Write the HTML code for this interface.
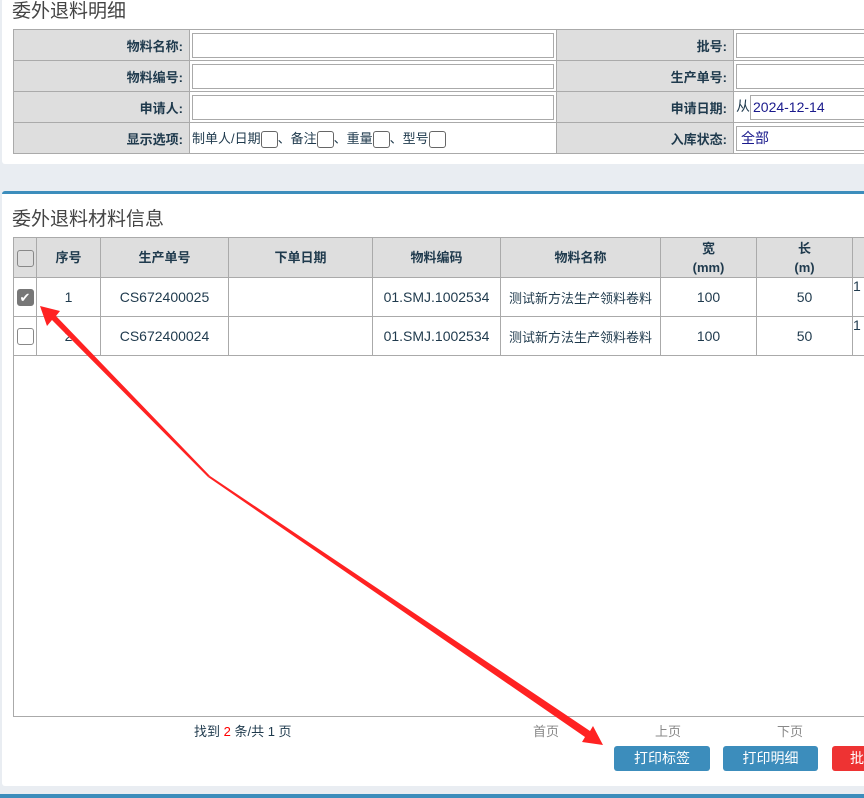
<!DOCTYPE html>
<html><head><meta charset="utf-8"><style>
*{box-sizing:border-box;margin:0;padding:0}
body{width:864px;height:798px;overflow:hidden;background:#e9edf2;font-family:"Liberation Sans","Noto Sans CJK SC",sans-serif;color:#1f3a4d;position:relative}
.p1{position:absolute;left:2px;top:-2px;width:870px;height:166px;background:#fff;border-radius:3px}
.p2{position:absolute;left:2px;top:191px;width:870px;height:595px;background:#fff;border-top:3px solid #3c8dbc;border-radius:3px}
.ln{position:absolute;left:0;top:794px;width:864px;height:4px;background:#3c8dbc}
h3{position:absolute;font-weight:normal;font-size:19px;color:#444}
table{border-collapse:collapse;position:absolute;table-layout:fixed}
td,th{border:1px solid #aaa;font-size:13px;white-space:nowrap;overflow:hidden}
.f td{height:31px;padding:0}
.f .l{background:#dedede;text-align:right;font-weight:bold;padding-right:6px;color:#1f3a4d}
.inp{border:1px solid #aaa;height:25px;margin:0 2px;background:#fff}
.cb{display:inline-block;width:17px;height:17px;border:1px solid #666;border-radius:3px;vertical-align:middle}
.g th{background:#dedede;font-weight:bold;height:40px;line-height:19px}
.g td{height:39px;text-align:center;font-size:14px}
.btn{position:absolute;top:746px;height:25px;background:#3c8dbc;color:#fff;font-size:14px;text-align:center;line-height:25px;border-radius:3px}
</style></head><body>
<div class="p1"></div>
<h3 style="left:12px;top:-4px">委外退料明细</h3>
<table class="f" style="left:13px;top:29px;width:900px">
<colgroup><col style="width:176px"><col style="width:367px"><col style="width:177px"><col style="width:180px"></colgroup>
<tr><td class="l">物料名称:</td><td><div class="inp"></div></td><td class="l">批号:</td><td><div class="inp"></div></td></tr>
<tr><td class="l">物料编号:</td><td><div class="inp"></div></td><td class="l">生产单号:</td><td><div class="inp"></div></td></tr>
<tr><td class="l">申请人:</td><td><div class="inp"></div></td><td class="l">申请日期:</td><td style="font-size:14px;padding-left:2px">从<span class="inp" style="display:inline-block;width:200px;margin:0;color:#1a1a8c;padding-left:2px;line-height:23px;vertical-align:middle">2024-12-14</span></td></tr>
<tr><td class="l">显示选项:</td><td style="padding-left:2px;font-size:13px">制单人/日期<span class="cb"></span>、备注<span class="cb"></span>、重量<span class="cb"></span>、型号<span class="cb"></span></td><td class="l">入库状态:</td><td><div class="inp" style="color:#1a1a8c;padding-left:4px;line-height:23px;font-size:14px">全部</div></td></tr>
</table>
<div class="p2"></div>
<div class="ln"></div>
<h3 style="left:12px;top:204px">委外退料材料信息</h3>
<div style="position:absolute;left:13px;top:237px;width:870px;height:480px;border:1px solid #aaa"></div>
<table class="g" style="left:13px;top:237px;width:900px">
<colgroup><col style="width:23px"><col style="width:64px"><col style="width:128px"><col style="width:144px"><col style="width:128px"><col style="width:160px"><col style="width:96px"><col style="width:96px"><col style="width:61px"></colgroup>
<tr><th><span class="cb" style="border-color:#888"></span></th><th>序号</th><th>生产单号</th><th>下单日期</th><th>物料编码</th><th>物料名称</th><th>宽<br>(mm)</th><th>长<br>(m)</th><th></th></tr>
<tr><td style="padding:0"><span class="cb" style="background:#777;border-color:#777;color:#fff;font-size:13px;line-height:15px">✔</span></td><td>1</td><td>CS672400025</td><td></td><td>01.SMJ.1002534</td><td style="font-size:13px">测试新方法生产领料卷料</td><td>100</td><td>50</td><td style="text-align:left;vertical-align:top">1</td></tr>
<tr><td style="padding:0"><span class="cb" style="border-color:#888"></span></td><td>2</td><td>CS672400024</td><td></td><td>01.SMJ.1002534</td><td style="font-size:13px">测试新方法生产领料卷料</td><td>100</td><td>50</td><td style="text-align:left;vertical-align:top">1</td></tr>
</table>
<div style="position:absolute;left:194px;top:721px;font-size:13px">找到 <span style="color:red">2</span> 条/共 1 页</div>
<div style="position:absolute;left:533px;top:721px;font-size:13px;color:#888">首页</div>
<div style="position:absolute;left:655px;top:721px;font-size:13px;color:#888">上页</div>
<div style="position:absolute;left:777px;top:721px;font-size:13px;color:#888">下页</div>
<div class="btn" style="left:614px;width:96px">打印标签</div>
<div class="btn" style="left:723px;width:95px">打印明细</div>
<div class="btn" style="left:832px;width:60px;background:#e33;text-align:left;padding-left:18px">批</div>
<svg width="864" height="798" style="position:absolute;left:0;top:0">
<polygon points="40,306 60,311 56,316 210,476 208,477 52,320 47,326" fill="#f22"/>
<polygon points="603,745 582,742 585,737 208,477 210,476 590,731 593,726" fill="#f22"/>
</svg>
</body></html>
